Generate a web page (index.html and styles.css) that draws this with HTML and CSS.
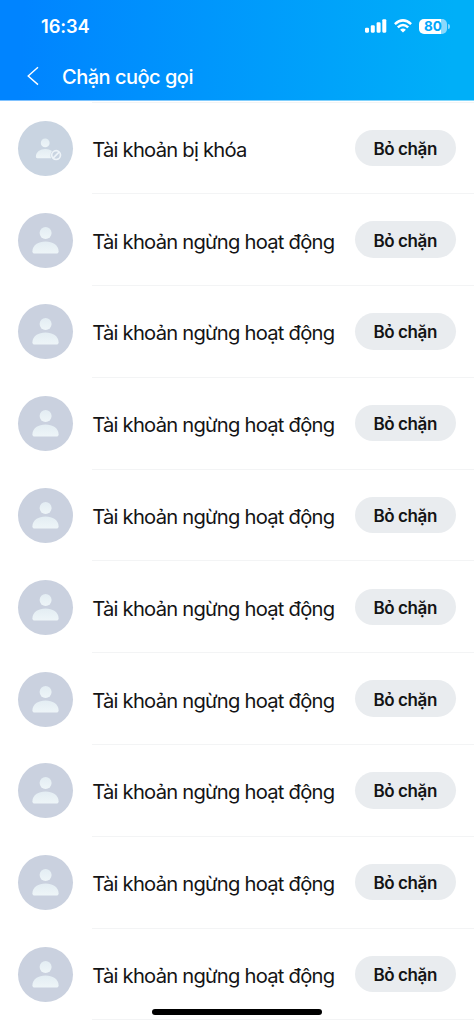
FILE: index.html
```
<!DOCTYPE html>
<html lang="vi">

<head>
    <meta charset="UTF-8">
    <meta name="viewport" content="width=device-width, initial-scale=1.0">
    <title>Chặn cuộc gọi</title>
    <link rel="stylesheet" href="styles.css">
</head>

<body>
    <svg class="sprite" width="0" height="0">
        <defs>
            <linearGradient id="personFill" x1="0" y1="0" x2="0" y2="1">
                <stop offset="0" stop-color="#e3edf3" />
                <stop offset="1" stop-color="#eef5f8" />
            </linearGradient>
        </defs>
        <symbol id="person" viewBox="0 0 55 55">
            <circle cx="27.6" cy="20" r="6" fill="url(#personFill)" />
            <path d="M14.4 38.2C14.4 32.2 20.4 28.5 27.5 28.5S40.6 32.2 40.6 38.2C40.6 39.8 39.8 40.6 38.2 40.6H16.8C15.2 40.6 14.4 39.8 14.4 38.2Z" fill="url(#personFill)" />
        </symbol>
        <symbol id="personLocked" viewBox="0 0 55 55">
            <circle cx="27.2" cy="21.9" r="4.4" fill="url(#personFill)" />
            <path d="M17.9 35.6C17.9 31.2 22.2 28.1 27.3 28.1C29.9 28.1 32.2 28.8 34 30.1C32.4 32 32 34.8 33 37.3H19.2C18.4 37.3 17.9 36.7 17.9 35.6Z" fill="url(#personFill)" />
            <circle cx="38.1" cy="34.1" r="4.4" fill="none" stroke="#edf3f8" stroke-width="1.7" />
            <path d="M35.1 37.1L41.1 31.1" stroke="#edf3f8" stroke-width="1.7" />
        </symbol>
    </svg>

    <div class="header">
        <div class="status">
            <span class="time">16:34</span>
            <div class="indicators">
                <svg class="signal" width="22" height="14" viewBox="0 0 22 14" fill="#fff">
                    <rect x="0" y="8.8" width="4" height="4.9" rx="1.1" />
                    <rect x="5.8" y="6.3" width="4" height="7.4" rx="1.1" />
                    <rect x="11.6" y="3.3" width="4" height="10.4" rx="1.1" />
                    <rect x="17.3" y="0.2" width="4" height="13.5" rx="1.1" />
                </svg>
                <svg class="wifi" width="18" height="14" viewBox="0 0 18 14" fill="none" stroke="#fff" stroke-width="2.5">
                    <path d="M0.9 5.2Q9 -2.4 17.1 5.2" />
                    <path d="M3.8 8.4Q9 3.5 14.2 8.4" />
                    <path d="M9 13.6L6.1 10.7Q9 8.2 11.9 10.7Z" fill="#fff" stroke="none" />
                </svg>
                <div class="battery">80</div>
                <span class="battery-tip"></span>
            </div>
        </div>
        <div class="nav">
            <svg class="back" width="12" height="20" viewBox="0 0 12 20" fill="none" stroke="#fff" stroke-width="1.4">
                <path d="M11 1.2L1.2 10L11 18.6" />
            </svg>
            <h1>Chặn cuộc gọi</h1>
        </div>
    </div>

    <div class="list">
        <div class="row">
            <svg class="avatar locked"><use href="#personLocked" /></svg>
            <div class="info"><span class="name">Tài khoản bị khóa</span><button class="btn">Bỏ chặn</button></div>
        </div>
        <div class="row">
            <svg class="avatar"><use href="#person" /></svg>
            <div class="info"><span class="name">Tài khoản ngừng hoạt động</span><button class="btn">Bỏ chặn</button></div>
        </div>
        <div class="row">
            <svg class="avatar"><use href="#person" /></svg>
            <div class="info"><span class="name">Tài khoản ngừng hoạt động</span><button class="btn">Bỏ chặn</button></div>
        </div>
        <div class="row">
            <svg class="avatar"><use href="#person" /></svg>
            <div class="info"><span class="name">Tài khoản ngừng hoạt động</span><button class="btn">Bỏ chặn</button></div>
        </div>
        <div class="row">
            <svg class="avatar"><use href="#person" /></svg>
            <div class="info"><span class="name">Tài khoản ngừng hoạt động</span><button class="btn">Bỏ chặn</button></div>
        </div>
        <div class="row">
            <svg class="avatar"><use href="#person" /></svg>
            <div class="info"><span class="name">Tài khoản ngừng hoạt động</span><button class="btn">Bỏ chặn</button></div>
        </div>
        <div class="row">
            <svg class="avatar"><use href="#person" /></svg>
            <div class="info"><span class="name">Tài khoản ngừng hoạt động</span><button class="btn">Bỏ chặn</button></div>
        </div>
        <div class="row">
            <svg class="avatar"><use href="#person" /></svg>
            <div class="info"><span class="name">Tài khoản ngừng hoạt động</span><button class="btn">Bỏ chặn</button></div>
        </div>
        <div class="row">
            <svg class="avatar"><use href="#person" /></svg>
            <div class="info"><span class="name">Tài khoản ngừng hoạt động</span><button class="btn">Bỏ chặn</button></div>
        </div>
        <div class="row">
            <svg class="avatar"><use href="#person" /></svg>
            <div class="info"><span class="name">Tài khoản ngừng hoạt động</span><button class="btn">Bỏ chặn</button></div>
        </div>
    </div>

    <div class="home-bar"></div>
</body>

</html>
```
FILE: styles.css
```
* {
    box-sizing: border-box;
}

body {
    font-family: Inter, "Liberation Sans", sans-serif;
    margin: 0;
    height: 1024px;
    overflow: hidden;
    position: relative;
    background-color: #fff;
    color: #141415;
}

.sprite {
    display: block;
}

.header {
    height: 101px;
    background: linear-gradient(93deg, #0084ff 5%, #00aff8 95%);
    border-bottom: 1px solid rgba(255, 255, 255, 0.5);
    color: #fff;
}

.status {
    display: flex;
    justify-content: space-between;
    height: 52px;
    padding: 0 24px 0 41px;
    align-items: center;
}

.time {
    font-size: 18.3px;
    font-weight: 600;
    letter-spacing: -0.1px;
}

.indicators {
    display: flex;
    align-items: center;
}

.wifi {
    margin: 0 7px;
}

.battery {
    width: 28px;
    height: 15px;
    border-radius: 5px;
    background: linear-gradient(90deg, #fff 80%, #8ad8fc 80%);
    color: #00a6fa;
    font-size: 13.5px;
    font-weight: 700;
    line-height: 15px;
    text-align: center;
}

.battery-tip {
    width: 2px;
    height: 5px;
    margin-left: 1px;
    border-radius: 0 2px 2px 0;
    background-color: #8ad8fc;
}

.nav {
    display: flex;
    align-items: center;
    height: 48px;
    padding-left: 27px;
}

.nav h1 {
    margin: 0 0 0 23px;
    padding-top: 1px;
    font-size: 20px;
    font-weight: 500;
    letter-spacing: -0.5px;
}

.list {
    padding-top: 1px;
}

.list::before {
    content: "";
    display: block;
    height: 1px;
    margin: 0 0 -0.6px 91.6px;
    background-color: #f3f4f5;
}

.row {
    display: flex;
    align-items: center;
    height: 91.8px;
    padding-left: 18.3px;
}

.avatar {
    flex: none;
    width: 55px;
    height: 55px;
    border-radius: 50%;
    background-color: #cad1df;
}

.avatar.locked {
    background-color: #c9d4e1;
}

.info {
    flex: 1;
    display: flex;
    align-items: center;
    justify-content: space-between;
    height: 100%;
    margin-left: 18.3px;
    padding-right: 18.3px;
    border-bottom: 1px solid #f3f4f5;
}

.name {
    padding: 3px 0 0 0.6px;
    font-size: 20.2px;
    letter-spacing: -0.76px;
    white-space: nowrap;
}

.btn {
    width: 101px;
    height: 36.5px;
    padding: 2px 0 0;
    border: none;
    border-radius: 19px;
    background-color: #e9ecef;
    color: #141415;
    font-family: inherit;
    font-size: 17px;
    font-weight: 600;
    letter-spacing: -0.4px;
}

.home-bar {
    position: absolute;
    left: 152px;
    bottom: 9.5px;
    width: 170px;
    height: 5.5px;
    border-radius: 3px;
    background-color: #000;
}
```
